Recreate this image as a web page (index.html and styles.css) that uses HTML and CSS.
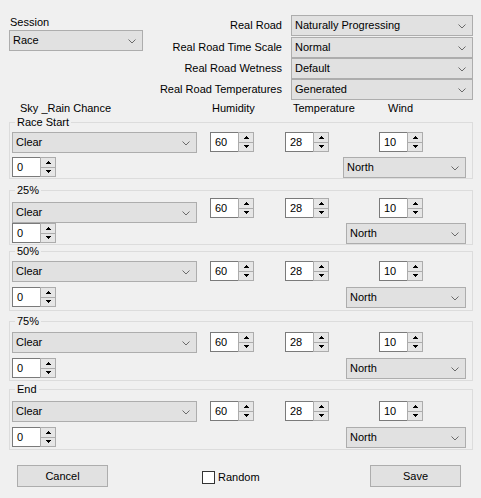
FILE: index.html
```html
<!DOCTYPE html>
<html>
<head>
<meta charset="utf-8">
<link rel="stylesheet" href="styles.css">
</head>
<body>
<div class="top">
  <div class="session">
    <div class="lbl">Session</div>
    <div class="combo session-combo"><span>Race</span><svg class="chev" width="8" height="5" viewBox="0 0 8 5"><polyline points="0.5,0.5 4,4 7.5,0.5"/></svg></div>
  </div>
  <div class="road">
    <div class="rlbl">Real Road</div>
    <div class="combo"><span>Naturally Progressing</span><svg class="chev" width="8" height="5" viewBox="0 0 8 5"><polyline points="0.5,0.5 4,4 7.5,0.5"/></svg></div>
    <div class="rlbl">Real Road Time Scale</div>
    <div class="combo"><span>Normal</span><svg class="chev" width="8" height="5" viewBox="0 0 8 5"><polyline points="0.5,0.5 4,4 7.5,0.5"/></svg></div>
    <div class="rlbl">Real Road Wetness</div>
    <div class="combo"><span>Default</span><svg class="chev" width="8" height="5" viewBox="0 0 8 5"><polyline points="0.5,0.5 4,4 7.5,0.5"/></svg></div>
    <div class="rlbl">Real Road Temperatures</div>
    <div class="combo"><span>Generated</span><svg class="chev" width="8" height="5" viewBox="0 0 8 5"><polyline points="0.5,0.5 4,4 7.5,0.5"/></svg></div>
  </div>
</div>

<div class="heads"><span>Sky _Rain Chance</span><span>Humidity</span><span>Temperature</span><span>Wind</span></div>

<fieldset class="group g1">
  <legend>Race Start</legend>
  <div class="row1">
    <div class="combo sky"><span>Clear</span><svg class="chev" width="8" height="5" viewBox="0 0 8 5"><polyline points="0.5,0.5 4,4 7.5,0.5"/></svg></div>
    <div class="spin hum"><span class="val">60</span><span class="btns"><span class="ud"><svg width="5" height="3" viewBox="0 0 5 3"><path d="M2 0h1v1h-1zM1 1h3v1h-3zM0 2h5v1h-5z"/></svg></span><span class="ud dn"><svg width="5" height="3" viewBox="0 0 5 3"><path d="M0 0h5v1h-5zM1 1h3v1h-3zM2 2h1v1h-1z"/></svg></span></span></div>
    <div class="spin temp"><span class="val">28</span><span class="btns"><span class="ud"><svg width="5" height="3" viewBox="0 0 5 3"><path d="M2 0h1v1h-1zM1 1h3v1h-3zM0 2h5v1h-5z"/></svg></span><span class="ud dn"><svg width="5" height="3" viewBox="0 0 5 3"><path d="M0 0h5v1h-5zM1 1h3v1h-3zM2 2h1v1h-1z"/></svg></span></span></div>
    <div class="spin wind"><span class="val">10</span><span class="btns"><span class="ud"><svg width="5" height="3" viewBox="0 0 5 3"><path d="M2 0h1v1h-1zM1 1h3v1h-3zM0 2h5v1h-5z"/></svg></span><span class="ud dn"><svg width="5" height="3" viewBox="0 0 5 3"><path d="M0 0h5v1h-5zM1 1h3v1h-3zM2 2h1v1h-1z"/></svg></span></span></div>
  </div>
  <div class="row2">
    <div class="spin"><span class="val">0</span><span class="btns"><span class="ud"><svg width="5" height="3" viewBox="0 0 5 3"><path d="M2 0h1v1h-1zM1 1h3v1h-3zM0 2h5v1h-5z"/></svg></span><span class="ud dn"><svg width="5" height="3" viewBox="0 0 5 3"><path d="M0 0h5v1h-5zM1 1h3v1h-3zM2 2h1v1h-1z"/></svg></span></span></div>
    <div class="combo north"><span>North</span><svg class="chev" width="8" height="5" viewBox="0 0 8 5"><polyline points="0.5,0.5 4,4 7.5,0.5"/></svg></div>
  </div>
</fieldset>

<fieldset class="group g2">
  <legend>25%</legend>
  <div class="row1">
    <div class="combo sky"><span>Clear</span><svg class="chev" width="8" height="5" viewBox="0 0 8 5"><polyline points="0.5,0.5 4,4 7.5,0.5"/></svg></div>
    <div class="spin hum"><span class="val">60</span><span class="btns"><span class="ud"><svg width="5" height="3" viewBox="0 0 5 3"><path d="M2 0h1v1h-1zM1 1h3v1h-3zM0 2h5v1h-5z"/></svg></span><span class="ud dn"><svg width="5" height="3" viewBox="0 0 5 3"><path d="M0 0h5v1h-5zM1 1h3v1h-3zM2 2h1v1h-1z"/></svg></span></span></div>
    <div class="spin temp"><span class="val">28</span><span class="btns"><span class="ud"><svg width="5" height="3" viewBox="0 0 5 3"><path d="M2 0h1v1h-1zM1 1h3v1h-3zM0 2h5v1h-5z"/></svg></span><span class="ud dn"><svg width="5" height="3" viewBox="0 0 5 3"><path d="M0 0h5v1h-5zM1 1h3v1h-3zM2 2h1v1h-1z"/></svg></span></span></div>
    <div class="spin wind"><span class="val">10</span><span class="btns"><span class="ud"><svg width="5" height="3" viewBox="0 0 5 3"><path d="M2 0h1v1h-1zM1 1h3v1h-3zM0 2h5v1h-5z"/></svg></span><span class="ud dn"><svg width="5" height="3" viewBox="0 0 5 3"><path d="M0 0h5v1h-5zM1 1h3v1h-3zM2 2h1v1h-1z"/></svg></span></span></div>
  </div>
  <div class="row2">
    <div class="spin"><span class="val">0</span><span class="btns"><span class="ud"><svg width="5" height="3" viewBox="0 0 5 3"><path d="M2 0h1v1h-1zM1 1h3v1h-3zM0 2h5v1h-5z"/></svg></span><span class="ud dn"><svg width="5" height="3" viewBox="0 0 5 3"><path d="M0 0h5v1h-5zM1 1h3v1h-3zM2 2h1v1h-1z"/></svg></span></span></div>
    <div class="combo north"><span>North</span><svg class="chev" width="8" height="5" viewBox="0 0 8 5"><polyline points="0.5,0.5 4,4 7.5,0.5"/></svg></div>
  </div>
</fieldset>

<fieldset class="group g3">
  <legend>50%</legend>
  <div class="row1">
    <div class="combo sky"><span>Clear</span><svg class="chev" width="8" height="5" viewBox="0 0 8 5"><polyline points="0.5,0.5 4,4 7.5,0.5"/></svg></div>
    <div class="spin hum"><span class="val">60</span><span class="btns"><span class="ud"><svg width="5" height="3" viewBox="0 0 5 3"><path d="M2 0h1v1h-1zM1 1h3v1h-3zM0 2h5v1h-5z"/></svg></span><span class="ud dn"><svg width="5" height="3" viewBox="0 0 5 3"><path d="M0 0h5v1h-5zM1 1h3v1h-3zM2 2h1v1h-1z"/></svg></span></span></div>
    <div class="spin temp"><span class="val">28</span><span class="btns"><span class="ud"><svg width="5" height="3" viewBox="0 0 5 3"><path d="M2 0h1v1h-1zM1 1h3v1h-3zM0 2h5v1h-5z"/></svg></span><span class="ud dn"><svg width="5" height="3" viewBox="0 0 5 3"><path d="M0 0h5v1h-5zM1 1h3v1h-3zM2 2h1v1h-1z"/></svg></span></span></div>
    <div class="spin wind"><span class="val">10</span><span class="btns"><span class="ud"><svg width="5" height="3" viewBox="0 0 5 3"><path d="M2 0h1v1h-1zM1 1h3v1h-3zM0 2h5v1h-5z"/></svg></span><span class="ud dn"><svg width="5" height="3" viewBox="0 0 5 3"><path d="M0 0h5v1h-5zM1 1h3v1h-3zM2 2h1v1h-1z"/></svg></span></span></div>
  </div>
  <div class="row2">
    <div class="spin"><span class="val">0</span><span class="btns"><span class="ud"><svg width="5" height="3" viewBox="0 0 5 3"><path d="M2 0h1v1h-1zM1 1h3v1h-3zM0 2h5v1h-5z"/></svg></span><span class="ud dn"><svg width="5" height="3" viewBox="0 0 5 3"><path d="M0 0h5v1h-5zM1 1h3v1h-3zM2 2h1v1h-1z"/></svg></span></span></div>
    <div class="combo north"><span>North</span><svg class="chev" width="8" height="5" viewBox="0 0 8 5"><polyline points="0.5,0.5 4,4 7.5,0.5"/></svg></div>
  </div>
</fieldset>

<fieldset class="group g4">
  <legend>75%</legend>
  <div class="row1">
    <div class="combo sky"><span>Clear</span><svg class="chev" width="8" height="5" viewBox="0 0 8 5"><polyline points="0.5,0.5 4,4 7.5,0.5"/></svg></div>
    <div class="spin hum"><span class="val">60</span><span class="btns"><span class="ud"><svg width="5" height="3" viewBox="0 0 5 3"><path d="M2 0h1v1h-1zM1 1h3v1h-3zM0 2h5v1h-5z"/></svg></span><span class="ud dn"><svg width="5" height="3" viewBox="0 0 5 3"><path d="M0 0h5v1h-5zM1 1h3v1h-3zM2 2h1v1h-1z"/></svg></span></span></div>
    <div class="spin temp"><span class="val">28</span><span class="btns"><span class="ud"><svg width="5" height="3" viewBox="0 0 5 3"><path d="M2 0h1v1h-1zM1 1h3v1h-3zM0 2h5v1h-5z"/></svg></span><span class="ud dn"><svg width="5" height="3" viewBox="0 0 5 3"><path d="M0 0h5v1h-5zM1 1h3v1h-3zM2 2h1v1h-1z"/></svg></span></span></div>
    <div class="spin wind"><span class="val">10</span><span class="btns"><span class="ud"><svg width="5" height="3" viewBox="0 0 5 3"><path d="M2 0h1v1h-1zM1 1h3v1h-3zM0 2h5v1h-5z"/></svg></span><span class="ud dn"><svg width="5" height="3" viewBox="0 0 5 3"><path d="M0 0h5v1h-5zM1 1h3v1h-3zM2 2h1v1h-1z"/></svg></span></span></div>
  </div>
  <div class="row2">
    <div class="spin"><span class="val">0</span><span class="btns"><span class="ud"><svg width="5" height="3" viewBox="0 0 5 3"><path d="M2 0h1v1h-1zM1 1h3v1h-3zM0 2h5v1h-5z"/></svg></span><span class="ud dn"><svg width="5" height="3" viewBox="0 0 5 3"><path d="M0 0h5v1h-5zM1 1h3v1h-3zM2 2h1v1h-1z"/></svg></span></span></div>
    <div class="combo north"><span>North</span><svg class="chev" width="8" height="5" viewBox="0 0 8 5"><polyline points="0.5,0.5 4,4 7.5,0.5"/></svg></div>
  </div>
</fieldset>

<fieldset class="group g5">
  <legend>End</legend>
  <div class="row1">
    <div class="combo sky"><span>Clear</span><svg class="chev" width="8" height="5" viewBox="0 0 8 5"><polyline points="0.5,0.5 4,4 7.5,0.5"/></svg></div>
    <div class="spin hum"><span class="val">60</span><span class="btns"><span class="ud"><svg width="5" height="3" viewBox="0 0 5 3"><path d="M2 0h1v1h-1zM1 1h3v1h-3zM0 2h5v1h-5z"/></svg></span><span class="ud dn"><svg width="5" height="3" viewBox="0 0 5 3"><path d="M0 0h5v1h-5zM1 1h3v1h-3zM2 2h1v1h-1z"/></svg></span></span></div>
    <div class="spin temp"><span class="val">28</span><span class="btns"><span class="ud"><svg width="5" height="3" viewBox="0 0 5 3"><path d="M2 0h1v1h-1zM1 1h3v1h-3zM0 2h5v1h-5z"/></svg></span><span class="ud dn"><svg width="5" height="3" viewBox="0 0 5 3"><path d="M0 0h5v1h-5zM1 1h3v1h-3zM2 2h1v1h-1z"/></svg></span></span></div>
    <div class="spin wind"><span class="val">10</span><span class="btns"><span class="ud"><svg width="5" height="3" viewBox="0 0 5 3"><path d="M2 0h1v1h-1zM1 1h3v1h-3zM0 2h5v1h-5z"/></svg></span><span class="ud dn"><svg width="5" height="3" viewBox="0 0 5 3"><path d="M0 0h5v1h-5zM1 1h3v1h-3zM2 2h1v1h-1z"/></svg></span></span></div>
  </div>
  <div class="row2">
    <div class="spin"><span class="val">0</span><span class="btns"><span class="ud"><svg width="5" height="3" viewBox="0 0 5 3"><path d="M2 0h1v1h-1zM1 1h3v1h-3zM0 2h5v1h-5z"/></svg></span><span class="ud dn"><svg width="5" height="3" viewBox="0 0 5 3"><path d="M0 0h5v1h-5zM1 1h3v1h-3zM2 2h1v1h-1z"/></svg></span></span></div>
    <div class="combo north"><span>North</span><svg class="chev" width="8" height="5" viewBox="0 0 8 5"><polyline points="0.5,0.5 4,4 7.5,0.5"/></svg></div>
  </div>
</fieldset>

<div class="actions">
  <button class="btn">Cancel</button>
  <label class="chk"><input type="checkbox" class="box"><span>Random</span></label>
  <button class="btn save">Save</button>
</div>
</body>
</html>
```

FILE: styles.css
```css
html, body {
  margin: 0;
  padding: 0;
  background: #f0f0f0;
}
body {
  font: 11px "Liberation Sans", Arial, sans-serif;
  color: #000;
  width: 481px;
  height: 498px;
  overflow: hidden;
}

.top {
  display: flex;
  align-items: flex-start;
  padding-top: 15px;
}
.session {
  margin-left: 9px;
  width: 134px;
}
.lbl {
  line-height: 14px;
  height: 14px;
  margin-left: 1px;
}
.session-combo {
  margin-top: 1px;
}

.road {
  margin-left: auto;
  margin-right: 8px;
  display: grid;
  grid-template-columns: auto 182px;
  grid-template-rows: 22px 21px 21px 21px;
  column-gap: 9px;
}
.rlbl {
  justify-self: end;
  align-self: start;
  line-height: 21px;
  white-space: nowrap;
}

.combo {
  box-sizing: border-box;
  height: 21px;
  border: 1px solid #adadad;
  background: #e1e1e1;
  display: flex;
  align-items: center;
  justify-content: space-between;
  padding: 0 6px 0 3px;
  white-space: nowrap;
}
.combo span {
  line-height: 19px;
}
.chev {
  flex: none;
  margin-top: 1px;
}
.chev polyline {
  fill: none;
  stroke: #6a6a6a;
  stroke-width: 1;
}

.heads {
  display: grid;
  grid-template-columns: 192px 81px 95px auto;
  padding-left: 20px;
  margin-top: 1px;
  line-height: 14px;
  height: 14px;
}

.group {
  margin: 0 8px 0 9px;
  border: 1px solid #dcdcdc;
  padding: 4px 2px 0 2px;
  min-width: 0;
}
.group legend {
  line-height: 12px;
  padding: 0 2px;
  margin-left: 3px;
}

.row1 {
  display: flex;
  align-items: flex-start;
}
.row2 {
  display: flex;
  align-items: flex-start;
  margin-top: 4px;
}
.sky {
  width: 185px;
}
.hum {
  margin-left: 13px;
}
.temp {
  margin-left: 31px;
}
.wind {
  margin-left: 50px;
}
.north {
  margin-left: auto;
  margin-right: 4px;
  width: 120px;
}

.spin {
  box-sizing: border-box;
  width: 44px;
  height: 20px;
  display: flex;
  flex: none;
}
.val {
  box-sizing: border-box;
  width: 28px;
  height: 20px;
  background: #fff;
  border: 1px solid #7a7a7a;
  border-right: none;
  padding-left: 4px;
  line-height: 18px;
}
.btns {
  box-sizing: border-box;
  width: 16px;
  height: 20px;
  border: 1px solid #acacac;
  background: #f0f0f0;
  display: flex;
  flex-direction: column;
}
.ud {
  flex: 1;
  display: flex;
  align-items: center;
  justify-content: center;
  background: #e6e6e6;
}
.ud.dn {
  border-top: 1px solid #acacac;
}
.ud svg {
  shape-rendering: crispEdges;
}
.ud svg path {
  fill: #000;
}

.g1 { margin-top: 1px; padding-top: 4px; }
.g1 .row2 { margin-top: 4px; }
.g1 .north { width: 123px; }

.g2 { margin-top: 5px; padding-top: 2px; }
.g2 .sky { margin-top: 4px; }
.g2 .row2 { margin-top: 0; }

.g3 { margin-top: 0; padding-top: 4px; padding-bottom: 2px; }
.g3 .row2 { margin-top: 5px; }

.g4 { margin-top: 4px; padding-top: 5px; padding-bottom: 1px; }
.g4 .row2 { margin-top: 5px; }

.g5 { margin-top: 2px; padding-top: 6px; padding-bottom: 1px; }
.g5 .row2 { margin-top: 5px; }

.actions {
  display: flex;
  align-items: center;
  margin-top: 15px;
  padding-left: 17px;
}
.btn {
  box-sizing: border-box;
  width: 91px;
  height: 22px;
  border: 1px solid #adadad;
  background: #e1e1e1;
  font: inherit;
  color: #000;
  padding: 0;
  margin: 0;
}
.chk {
  display: flex;
  align-items: center;
  margin-left: 94px;
  margin-top: 2px;
}
.box {
  appearance: none;
  -webkit-appearance: none;
  box-sizing: border-box;
  width: 13px;
  height: 13px;
  margin: 0 3px 0 0;
  border: 1px solid #333;
  background: #fff;
}
.save {
  margin-left: auto;
  margin-right: 20px;
}
```
